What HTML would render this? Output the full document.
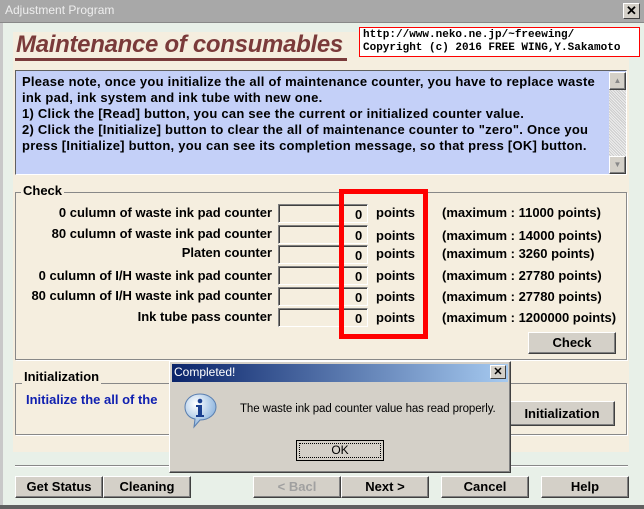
<!DOCTYPE html>
<html><head><meta charset="utf-8"><style>
*{margin:0;padding:0;box-sizing:border-box}
body{width:644px;height:509px;overflow:hidden;background:#e8f0e8;position:relative;font-family:"Liberation Sans Narrow","Liberation Sans",sans-serif;}
.a{position:absolute;white-space:nowrap}
.b{font-weight:bold;font-size:13px;color:#000}
.btn{position:absolute;background:#d4d0c8;border:1px solid;border-color:#fff #404040 #404040 #fff;box-shadow:inset -1px -1px 0 #808080;font-weight:bold;font-size:13px;text-align:center;line-height:19px}
.inp{position:absolute;left:278px;width:90px;height:19px;border:1px solid;border-color:#808080 #fff #fff #808080;box-shadow:inset 1px 1px 0 #404040}
.val{position:absolute;left:355px;font-weight:bold;font-size:13px}
.lab{position:absolute;right:372px;text-align:right;font-weight:bold;font-size:13px}
.pts{position:absolute;left:376px;font-weight:bold;font-size:13px}
.mx{position:absolute;left:442px;font-weight:bold;font-size:13px}
</style></head><body>
<div class="a" style="left:0;top:0;width:644px;height:23px;background:#a8a8a8;border-bottom:1px solid #888"></div>
<div class="a" style="left:5px;top:3px;font-family:'Liberation Sans',sans-serif;font-size:12px;color:#eee">Adjustment Program</div>
<div class="a" style="left:623px;top:3px;width:17px;height:16px;background:#d4d0c8;border:1px solid;border-color:#fff #404040 #404040 #fff;font:bold 13px 'Liberation Sans';text-align:center;line-height:14px">✕</div>
<div class="a" style="left:0;top:23px;width:3px;height:486px;background:#c8c8c8"></div>
<div class="a" style="left:0;top:505px;width:644px;height:4px;background:#606060"></div>

<div class="a" style="left:13px;top:32px;width:616px;height:420px;background:#f5eedf"></div>
<div class="a" style="left:16px;top:31px;font:italic bold 24px 'Liberation Sans',sans-serif;color:#7a3a3a;letter-spacing:-0.3px">Maintenance of consumables</div>
<div class="a" style="left:15px;top:58px;width:332px;height:3px;background:#7a3a3a"></div>
<div class="a" style="left:359px;top:27px;width:281px;height:30px;background:#fff;border:1px solid #f00;font:bold 11px 'Liberation Mono',monospace;line-height:13px;padding:1px 3px">http://www.neko.ne.jp/~freewing/<br>Copyright (c) 2016 FREE WING,Y.Sakamoto</div>

<div class="a" style="left:15px;top:70px;width:612px;height:105px;background:#c4d0f8;border:1px solid;border-color:#606060 #fff #fff #606060"></div>
<div class="a b" style="left:22px;top:74px;line-height:16px;font-size:13px;letter-spacing:0.25px">Please note, once you initialize the all of maintenance counter, you have to replace waste<br>ink pad, ink system and ink tube with new one.<br>1) Click the [Read] button, you can see the current or initialized counter value.<br>2) Click the [Initialize] button to clear the all of maintenance counter to "zero". Once you<br>press [Initialize] button, you can see its completion message, so that press [OK] button.</div>
<div class="a" style="left:609px;top:72px;width:17px;height:102px;background:#e0e0e0"></div>
<div class="a" style="left:609px;top:90px;width:17px;height:66px;background:repeating-linear-gradient(45deg,#eee 0 1px,#ccc 1px 2px)"></div>
<div class="btn" style="left:609px;top:72px;width:17px;height:18px;font-size:8px;line-height:16px;color:#888">▲</div>
<div class="btn" style="left:609px;top:156px;width:17px;height:18px;font-size:8px;line-height:16px;color:#888">▼</div>

<div class="a" style="left:15px;top:192px;width:612px;height:168px;border:1px solid #888;box-shadow:1px 1px 0 #fff"></div>
<div class="a b" style="left:21px;top:183px;background:#f5eedf;padding:0 2px">Check</div>

<div class="lab" style="top:205px">0 culumn of waste ink pad counter</div>
<div class="lab" style="top:226px">80 culumn of waste ink pad counter</div>
<div class="lab" style="top:245px">Platen counter</div>
<div class="lab" style="top:268px">0 culumn of I/H waste ink pad counter</div>
<div class="lab" style="top:288px">80 culumn of I/H waste ink pad counter</div>
<div class="lab" style="top:309px">Ink tube pass counter</div>
<div class="inp" style="top:204px"></div><div class="inp" style="top:225px"></div><div class="inp" style="top:245px"></div><div class="inp" style="top:266px"></div><div class="inp" style="top:287px"></div><div class="inp" style="top:308px"></div>
<div class="val" style="top:207px">0</div><div class="val" style="top:228px">0</div><div class="val" style="top:248px">0</div><div class="val" style="top:269px">0</div><div class="val" style="top:290px">0</div><div class="val" style="top:311px">0</div>
<div class="pts" style="top:205px">points</div><div class="pts" style="top:228px">points</div><div class="pts" style="top:246px">points</div><div class="pts" style="top:268px">points</div><div class="pts" style="top:289px">points</div><div class="pts" style="top:310px">points</div>
<div class="mx" style="top:205px">(maximum : 11000 points)</div>
<div class="mx" style="top:228px">(maximum : 14000 points)</div>
<div class="mx" style="top:246px">(maximum : 3260 points)</div>
<div class="mx" style="top:268px">(maximum : 27780 points)</div>
<div class="mx" style="top:289px">(maximum : 27780 points)</div>
<div class="mx" style="top:310px">(maximum : 1200000 points)</div>
<div class="a" style="left:339px;top:189px;width:89px;height:150px;border:5px solid #f00"></div>
<div class="btn" style="left:528px;top:332px;width:88px;height:22px">Check</div>

<div class="a" style="left:15px;top:383px;width:612px;height:52px;border:1px solid #888;box-shadow:1px 1px 0 #fff"></div>
<div class="a b" style="left:22px;top:369px;background:#f5eedf;padding:0 2px">Initialization</div>
<div class="a b" style="left:26px;top:392px;color:#1020b0">Initialize the all of the</div>
<div class="btn" style="left:509px;top:401px;width:106px;height:25px;line-height:23px">Initialization</div>

<div class="a" style="left:15px;top:465px;width:613px;height:1px;background:#888;box-shadow:0 1px 0 #fff"></div>
<div class="btn" style="left:15px;top:476px;width:88px;height:22px">Get Status</div>
<div class="btn" style="left:103px;top:476px;width:88px;height:22px">Cleaning</div>
<div class="btn" style="left:253px;top:476px;width:88px;height:22px;color:#a0a0a0">&lt; Bacl</div>
<div class="btn" style="left:341px;top:476px;width:88px;height:22px">Next &gt;</div>
<div class="btn" style="left:441px;top:476px;width:88px;height:22px">Cancel</div>
<div class="btn" style="left:541px;top:476px;width:88px;height:22px">Help</div>

<div class="a" style="left:169px;top:361px;width:342px;height:112px;background:#d4d0c8;border:1px solid;border-color:#fff #404040 #404040 #fff;box-shadow:inset -1px -1px 0 #808080"></div>
<div class="a" style="left:172px;top:364px;width:336px;height:18px;background:linear-gradient(90deg,#0a246a,#a6caf0)"></div>
<div class="a" style="left:174px;top:365px;font:12px 'Liberation Sans Narrow','Liberation Sans',sans-serif;color:#fff">Completed!</div>
<div class="a" style="left:490px;top:365px;width:16px;height:14px;background:#d4d0c8;border:1px solid;border-color:#fff #404040 #404040 #fff;font:bold 11px 'Liberation Sans';text-align:center;line-height:12px">✕</div>
<svg class="a" style="left:184px;top:393px" width="34" height="36" viewBox="0 0 34 36"><defs><radialGradient id="g" cx="0.35" cy="0.3" r="0.8"><stop offset="0" stop-color="#fff"/><stop offset="1" stop-color="#7aa8d8"/></radialGradient></defs><path d="M16 1C7 1 1 7 1 14c0 6 4 11 10 12l-1 8 6-7c9 0 16-6 16-13S25 1 16 1z" fill="url(#g)" stroke="#5a7fb0"/><circle cx="16" cy="8" r="2.3" fill="#1a3f8f"/><path d="M12 12h6v10h2v2h-8v-2h2v-8h-2z" fill="#1a3f8f"/></svg>
<div class="a" style="left:240px;top:403px;font:11.5px 'Liberation Sans Narrow','Liberation Sans',sans-serif;letter-spacing:-0.1px">The waste ink pad counter value has read properly.</div>
<div class="a" style="left:296px;top:440px;width:88px;height:21px;border:1px solid #000;background:#d4d0c8"><div style="margin:2px;height:15px;border:1px dotted #000;text-align:center;font:12px 'Liberation Sans',sans-serif;line-height:13px">OK</div></div>
</body></html>
